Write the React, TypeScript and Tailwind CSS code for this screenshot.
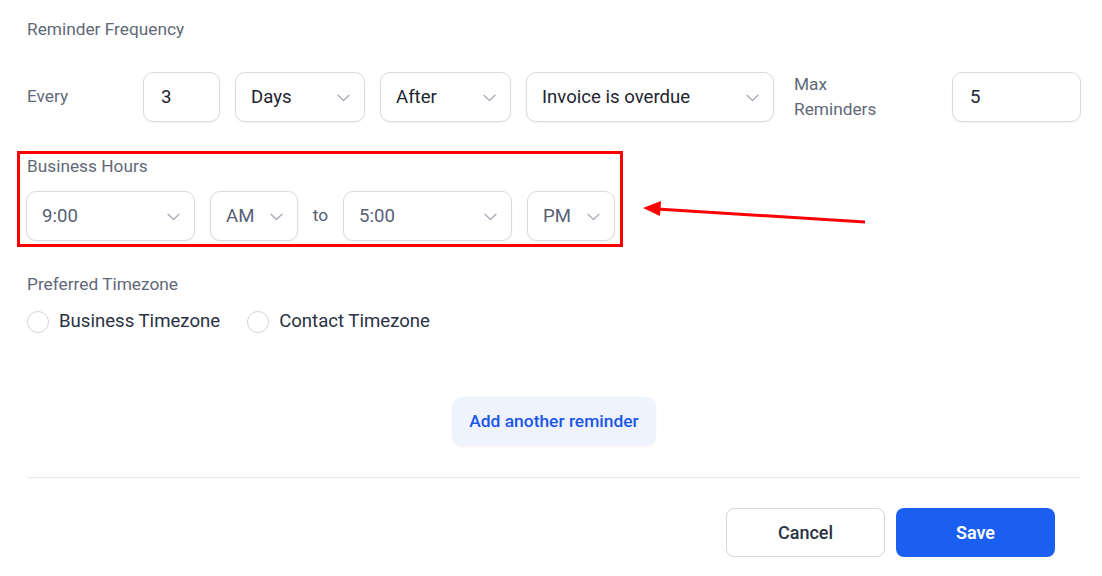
import React from "react";

const Chevron = () => (
  <svg width="13" height="8" viewBox="0 0 13 8" fill="none" className="shrink-0">
    <path d="M1 1.2L6.5 6.5L12 1.2" stroke="#a3a9b4" strokeWidth="1.2" strokeLinecap="round" strokeLinejoin="round" />
  </svg>
);

function Select({ value, w, muted }: { value: string; w: string; muted?: boolean }) {
  return (
    <div
      className={`${w} h-[50px] shrink-0 flex items-center justify-between pl-[15px] pr-[14px] pt-px rounded-[10px] border border-[#d8dbe3] bg-white shadow-[0_1px_2px_rgba(16,24,40,0.06)] text-[18.6px] ${
        muted ? "text-[#566176]" : "text-[#1f2430]"
      }`}
    >
      <span>{value}</span>
      <Chevron />
    </div>
  );
}

function Input({ value, w }: { value: string; w: string }) {
  return (
    <div
      className={`${w} h-[50px] shrink-0 flex items-center pl-[17px] pt-px rounded-[10px] border border-[#d8dbe3] bg-white shadow-[0_1px_2px_rgba(16,24,40,0.06)] text-[18.6px] text-[#1f2430]`}
    >
      {value}
    </div>
  );
}

function Radio({ label }: { label: string }) {
  return (
    <div className="flex items-center gap-[10px]">
      <div className="w-[22px] h-[22px] rounded-full border border-[#d3d6de] bg-white" />
      <span className="text-[18.6px] text-[#2a3142]">{label}</span>
    </div>
  );
}

export default function App() {
  return (
    <div
      className="w-[1102px] h-[576px] bg-white overflow-hidden pl-[27px] pr-[21px] pt-[17px]"
      style={{ fontFamily: "Roboto, 'Noto Sans', sans-serif" }}
    >
      <div className="text-[17.3px] leading-[24px] text-[#5f6978]">Reminder Frequency</div>

      <div className="mt-[31px] flex items-center">
        <div className="w-[116px] text-[17.3px] text-[#5f6978]">Every</div>
        <Input value="3" w="w-[77px]" />
        <div className="w-[15px]" />
        <Select value="Days" w="w-[130px]" />
        <div className="w-[15px]" />
        <Select value="After" w="w-[131px]" />
        <div className="w-[15px]" />
        <Select value="Invoice is overdue" w="w-[248px]" />
        <div className="w-[20px]" />
        <div className="w-[158px] text-[17.3px] leading-[25px] text-[#5f6978]">
          Max
          <br />
          Reminders
        </div>
        <Input value="5" w="w-[129px]" />
      </div>

      <div className="relative mt-[32px]">
        <div className="text-[17.3px] leading-[24px] text-[#5f6978]">Business Hours</div>
        <div className="mt-[13px] -ml-px flex items-center">
          <Select value="9:00" w="w-[169px]" muted />
          <div className="w-[15px]" />
          <Select value="AM" w="w-[88px]" muted />
          <div className="w-[45px] text-center text-[17.3px] text-[#566176]">to</div>
          <Select value="5:00" w="w-[169px]" muted />
          <div className="w-[15px]" />
          <Select value="PM" w="w-[88px]" muted />
        </div>
        <div className="absolute left-[-10px] top-[-3px] w-[606px] h-[96px] border-[3px] border-[#ff0000] pointer-events-none" />
        <svg
          className="absolute left-[610px] top-[40px]"
          width="240"
          height="30"
          viewBox="0 0 240 30"
          fill="none"
        >
          <line x1="228" y1="28" x2="20" y2="15" stroke="#ff0000" strokeWidth="3" />
          <polygon points="6,14 24,7 23,22" fill="#ff0000" />
        </svg>
      </div>

      <div className="mt-[31px] text-[17.3px] leading-[24px] text-[#5f6978]">Preferred Timezone</div>
      <div className="mt-[12px] flex items-center gap-[27px] h-[28px]">
        <Radio label="Business Timezone" />
        <Radio label="Contact Timezone" />
      </div>

      <div className="mt-[61px] flex justify-center">
        <div className="w-[204px] h-[49px] rounded-[10px] bg-[#eef3fe] shadow-[0_1px_2px_rgba(16,24,40,0.05)] flex items-center justify-center text-[17.4px] font-medium text-[#1b56e8]">
          Add another reminder
        </div>
      </div>

      <div className="mt-[31px] h-px bg-[#e6e8ec]" />

      <div className="mt-[30px] flex justify-end gap-[11px] pr-[26px]">
        <div className="w-[159px] h-[49px] rounded-[8px] border border-[#d3d6de] bg-white flex items-center justify-center text-[18px] font-medium text-[#2a3142]">
          Cancel
        </div>
        <div className="w-[159px] h-[49px] rounded-[8px] bg-[#1a5ff0] flex items-center justify-center text-[18px] font-semibold text-white">
          Save
        </div>
      </div>
    </div>
  );
}
